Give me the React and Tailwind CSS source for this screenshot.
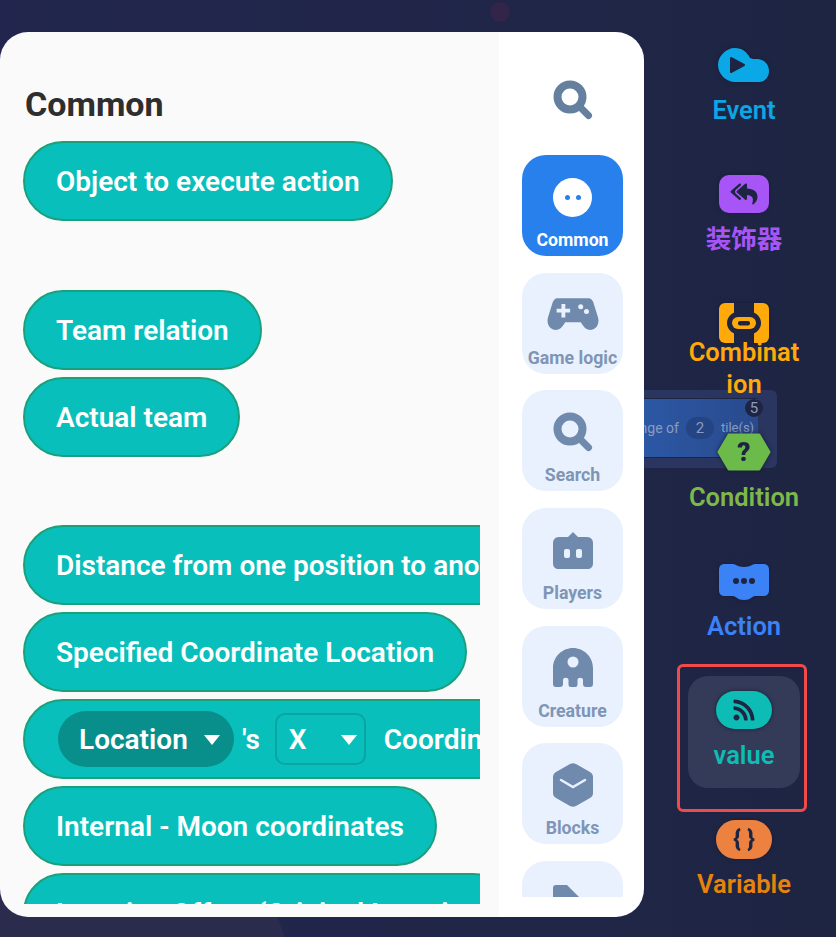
import React from 'react';
import { FaReplyAll, FaRss } from 'react-icons/fa';

const SearchIcon = ({ className }) => (
  <svg viewBox="0 0 40 40" className={className} fill="none" stroke="currentColor">
    <circle cx="17" cy="17" r="12.5" strokeWidth="8" />
    <path d="M27 27 L35.5 35.5" strokeWidth="7" strokeLinecap="round" />
  </svg>
);

const GamepadIcon = () => (
  <svg viewBox="0 0 54 34" className="w-[52px] h-[33px]">
    <path fill="#708aad" d="M11 0 H43 C46 0 47 2 48 4 L53 20 C55 28 50 33 45 33 C41 33 39 31 37 28 L35 25 H19 L17 28 C15 31 13 33 9 33 C4 33 -1 28 1 20 L6 4 C7 2 8 0 11 0 Z" />
    <path fill="#e8f1fd" d="M15 6 H19 V11 H24 V15 H19 V20 H15 V15 H10 V11 H15 Z" />
    <circle cx="35" cy="9" r="2.6" fill="#e8f1fd" />
    <circle cx="41" cy="14" r="2.6" fill="#e8f1fd" />
  </svg>
);

const BotIcon = () => (
  <svg viewBox="0 0 40 37" className="w-[40px] h-[37px]">
    <path fill="#708aad" d="M20 0 L25 5 H34 C38 5 40 8 40 11 V31 C40 35 38 37 34 37 H6 C2 37 0 35 0 31 V11 C0 8 2 5 6 5 H15 Z" />
    <rect x="11" y="17" width="6" height="9" rx="2" fill="#e8f1fd" />
    <rect x="23" y="17" width="6" height="9" rx="2" fill="#e8f1fd" />
  </svg>
);

const CreatureIcon = () => (
  <svg viewBox="0 0 40 39" className="w-[40px] h-[39px]">
    <path fill="#708aad" d="M20 0 C31 0 40 9 40 20 V36 C40 38 39 39 37 39 H33 C31 39 30 38 30 36 V32 C30 29 24.5 29 24.5 32 V36 C24.5 38 24 39 22 39 H18 C16 39 15.5 38 15.5 36 V32 C15.5 29 10 29 10 32 V36 C10 38 9 39 7 39 H3 C1 39 0 38 0 36 V20 C0 9 9 0 20 0 Z" />
    <circle cx="20" cy="14" r="5.5" fill="#e8f1fd" />
  </svg>
);

const BlocksIcon = () => (
  <svg viewBox="0 0 40 44" className="w-[40px] h-[44px]">
    <path fill="#708aad" d="M17 1 C19 0 21 0 23 1 L37 9 C39 10 40 12 40 14 V30 C40 32 39 34 37 35 L23 43 C21 44 19 44 17 43 L3 35 C1 34 0 32 0 30 V14 C0 12 1 10 3 9 Z" />
    <path fill="none" stroke="#e8f1fd" strokeWidth="2.5" strokeLinecap="round" d="M8 17 L20 24 L32 17" />
  </svg>
);

const FileIcon = () => (
  <svg viewBox="0 0 40 44" className="w-[40px] h-[44px]">
    <path fill="#708aad" d="M3 4 H14 L38 28 V44 H0 V7 C0 5 1 4 3 4 Z" />
  </svg>
);

const Block = ({ children }) => (
  <div className="w-max h-20 shrink-0 flex items-center px-[31px] pt-[2px] rounded-full border-2 border-[#1ba07c] bg-[#08bfbb] text-white text-[28px] font-semibold whitespace-nowrap">
    {children}
  </div>
);

const Caret = () => <span className="block w-0 h-0 border-x-[8px] border-x-transparent border-t-[10px] border-t-white" />;

const Tile = ({ icon, label }) => (
  <div className="w-[101px] h-[101px] shrink-0 rounded-[24px] bg-[#e8f1fd] flex flex-col items-center">
    <div className="h-[44px] mt-[20px] flex items-center justify-center">{icon}</div>
    <div className="mt-[10px] text-[17.7px] leading-[22px] font-bold text-[#7f95b6] whitespace-nowrap">{label}</div>
  </div>
);

const RailItem = ({ icon, label, color, active }) => (
  <div className={`relative w-[112px] h-[112px] shrink-0 rounded-[20px] flex flex-col items-center ${active ? 'bg-[#343b58]' : ''}`}>
    {active && <div className="absolute -left-[11px] -right-[7px] -top-[12px] -bottom-[24px] border-[3px] border-[#f04a4a] rounded-[6px]" />}
    <div className="h-[40px] mt-[14px] flex items-center justify-center drop-shadow-[0_0_2px_#171c35]">{icon}</div>
    <div className={`relative h-[32px] mt-[9px] w-full flex items-center justify-center text-center text-[25.5px] leading-[32px] font-semibold break-all ${color}`}>
      {label}
    </div>
  </div>
);

export default function App() {
  return (
    <div className="relative w-[836px] h-[937px] overflow-hidden flex items-start bg-gradient-to-r from-[#22264e] to-[#1e2543] font-['Roboto','Noto_Sans_CJK_SC',sans-serif]">
      {/* stuff behind the panel */}
      <div className="absolute left-0 bottom-0 w-[285px] h-[40px] bg-[#2a2b4d] [clip-path:polygon(0_0,270px_0,285px_100%,0_100%)]" />
      <div className="absolute left-[490px] top-[2px] w-[20px] h-[20px] rounded-full bg-[#33244a]" />
      <div className="absolute left-[560px] top-[390px] w-[217px] h-[78px] rounded-[6px] bg-[#2a3560]">
        <div className="relative mt-[8px] w-[198px] h-[60px] bg-gradient-to-r from-[#2d62b5] to-[#294a8d] border-y border-[#1e2543] flex items-center text-[14px] text-[#8b9bc0] whitespace-nowrap">
          <span className="ml-[72px]">ange of</span>
          <span className="ml-[7px] w-[28px] h-[22px] shrink-0 rounded-full bg-[#254483] flex items-center justify-center text-[15px]">2</span>
          <span className="ml-[7px] text-[13px]">tile(s)</span>
          <span className="absolute right-[-5px] top-0 w-[18px] h-[18px] rounded-full bg-[#1e2543] flex items-center justify-center text-[15px]">5</span>
        </div>
      </div>

      <div className="relative mt-[32px] w-[644px] h-[885px] shrink-0 flex rounded-[28px] overflow-hidden">
        <div className="w-[499px] h-full bg-[#fafafb] pl-[23px] pt-[53px]">
          <div className="w-[457px] h-[819px] overflow-hidden">
            <h2 className="pl-[2px] text-[34px] leading-[38px] font-bold text-[#2e2e2e]">Common</h2>
            <div className="flex flex-col gap-[7px] mt-[18px]">
              <Block>Object to execute action</Block>
              <div className="mt-[62px] flex flex-col gap-[7px]">
                <Block>Team relation</Block>
                <Block>Actual team</Block>
              </div>
              <div className="mt-[61px] flex flex-col gap-[7px]">
                <Block>Distance from one position to another</Block>
                <Block>Specified Coordinate Location</Block>
                <div className="w-max h-20 shrink-0 flex items-center pl-[33px] pr-[31px] rounded-full border-2 border-[#1ba07c] bg-[#08bfbb] text-white text-[28px] font-semibold whitespace-nowrap">
                  <div className="h-[56px] w-[176px] shrink-0 rounded-full bg-[#088f8c] flex items-center pl-[21px] pt-[2px]">
                    Location
                    <span className="ml-[16px]"><Caret /></span>
                  </div>
                  <span className="ml-[8px] pt-[2px]">'s</span>
                  <div className="ml-[15px] h-[52px] w-[91px] shrink-0 rounded-[10px] border-2 border-[#09a5a3] flex items-center pl-[12px] pt-[2px]">
                    X
                    <span className="ml-[34px]"><Caret /></span>
                  </div>
                  <span className="ml-[18px] pt-[2px]">Coordinate</span>
                </div>
                <Block>Internal - Moon coordinates</Block>
                <Block>Location Offset (Original Location</Block>
              </div>
            </div>
          </div>
        </div>

        <div className="w-[145px] h-full bg-white flex flex-col items-start pl-[23px]">
          <SearchIcon className="ml-[31px] w-[40px] h-[40px] mt-[48px] text-[#657f9f]" />
          <div className="mt-[35px] h-[742px] overflow-hidden flex flex-col gap-[16.7px]">
            <div className="w-[101px] h-[101px] shrink-0 rounded-[24px] bg-[#2880ec] flex flex-col items-center">
              <div className="w-[39px] h-[39px] mt-[23px] rounded-full bg-white flex items-center justify-center gap-[6px]">
                <span className="w-[5px] h-[5px] rounded-full bg-[#2880ec]" />
                <span className="w-[5px] h-[5px] rounded-full bg-[#2880ec]" />
              </div>
              <div className="mt-[12px] text-[17.7px] leading-[22px] font-bold text-white">Common</div>
            </div>
            <Tile icon={<GamepadIcon />} label="Game logic" />
            <Tile icon={<SearchIcon className="w-[40px] h-[40px] text-[#708aad]" />} label="Search" />
            <Tile icon={<BotIcon />} label="Players" />
            <Tile icon={<CreatureIcon />} label="Creature" />
            <Tile icon={<BlocksIcon />} label="Blocks" />
            <Tile icon={<FileIcon />} label="Text" />
          </div>
        </div>
      </div>

      <div className="relative ml-[44px] pt-[31px] flex flex-col gap-[17px]">
        <RailItem
          color="text-[#0ca6e6]"
          label="Event"
          icon={
            <svg viewBox="0 0 51 34" className="w-[51px] h-[34px] -translate-x-[1px]">
              <path fill="#0ba8e8" d="M17 0 C24 0 29 4 32 10 C34 11 36 11 39 11 C46 11 51 16 51 23 C51 29 47 34 41 34 H17 C8 34 0 26 0 17 C0 8 8 0 17 0 Z" />
              <path fill="#1e2543" stroke="#1e2543" strokeWidth="2" strokeLinejoin="round" d="M13 10 L26 17 L13 24 Z" />
            </svg>
          }
        />
        <RailItem
          color="text-[#a855f7]"
          label="装饰器"
          icon={
            <div className="w-[50px] h-[38px] rounded-[10px] bg-[#a855f7] flex items-center justify-center text-[#1e2543]">
              <FaReplyAll className="w-[30px] h-[24px]" />
            </div>
          }
        />
        <RailItem
          color="text-[#ffa90a]"
          label="Combination"
          icon={
            <svg viewBox="0 0 50 40" className="w-[50px] h-[40px]">
              <rect width="50" height="40" rx="6" fill="#ffa90a" />
              <rect x="15" width="20" height="40" fill="#1e2543" />
              <rect x="8" y="9" width="34" height="22" rx="11" fill="#1e2543" />
              <rect x="13" y="14" width="24" height="12" rx="6" fill="#ffa90a" />
              <rect x="19" y="18" width="12" height="4.5" rx="2" fill="#1e2543" />
            </svg>
          }
        />
        <RailItem
          color="text-[#7fb84a]"
          label="Condition"
          icon={
            <div className="relative w-[54px] h-[38px] flex items-center justify-center">
              <svg viewBox="0 0 54 38" className="absolute inset-0 w-[54px] h-[38px]">
                <path fill="#6cbb4a" stroke="#6cbb4a" strokeWidth="3" strokeLinejoin="round" d="M2 19 L12 2 H42 L52 19 L42 36 H12 Z" />
              </svg>
              <span className="relative text-[26px] leading-none font-black text-[#1e2543]">?</span>
            </div>
          }
        />
        <RailItem
          color="text-[#3b82f6]"
          label="Action"
          icon={
            <div className="relative w-[50px] h-[37px] flex items-center justify-center">
              <svg viewBox="0 0 50 37" className="absolute inset-0 w-[50px] h-[37px]">
                <path fill="#3b82f6" d="M6 1 H14 C17 1 18 4 25 4 C32 4 33 1 36 1 H44 C48 1 50 3 50 7 V27 C50 31 48 33 44 33 H36 C33 33 32 37 25 37 C18 37 17 33 14 33 H6 C2 33 0 31 0 27 V7 C0 3 2 1 6 1 Z" />
              </svg>
              <div className="relative flex gap-[2px]">
                <span className="w-[6px] h-[6px] rounded-full bg-[#1e2543]" />
                <span className="w-[6px] h-[6px] rounded-full bg-[#1e2543]" />
                <span className="w-[6px] h-[6px] rounded-full bg-[#1e2543]" />
              </div>
            </div>
          }
        />
        <RailItem
          active
          color="text-[#0dbdb5]"
          label="value"
          icon={
            <div className="w-[56px] h-[38px] rounded-full bg-[#0dbdb5] flex items-center justify-center text-[#1e2543]">
              <FaRss className="w-[24px] h-[24px]" />
            </div>
          }
        />
        <RailItem
          color="text-[#e6830f]"
          label="Variable"
          icon={
            <div className="w-[56px] h-[39px] rounded-full bg-[#ed8140] flex items-center justify-center text-[#1e2543] text-[24px] font-black">
              {'{ }'}
            </div>
          }
        />
      </div>
    </div>
  );
}
